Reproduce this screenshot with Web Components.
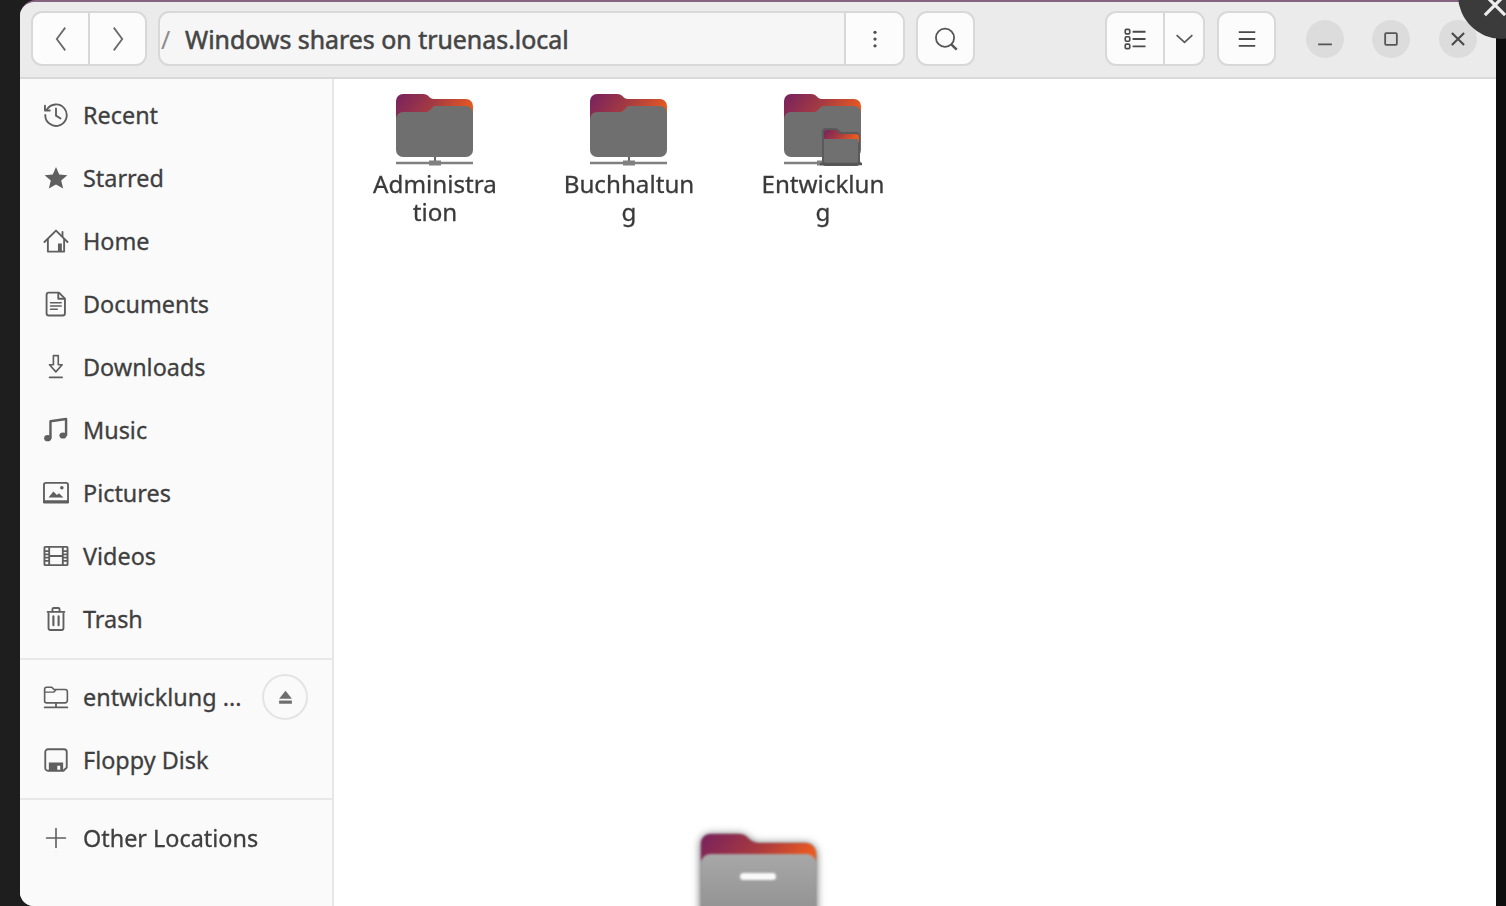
<!DOCTYPE html>
<html lang="en">
<head>
<meta charset="utf-8">
<title>Windows shares on truenas.local</title>
<style>
  html, body { margin: 0; height: 100%; overflow: hidden; background: linear-gradient(90deg, #1e1e1e 0 20px, #0e0e0e 1496px); }
  body { font-family: "Noto Sans", "Open Sans", sans-serif; color: #3d3d3d; }
</style>
</head>
<body>
<fm-window>
  <fm-header slot="header"></fm-header>
  <fm-sidebar slot="sidebar">
    <fm-place icon="recent">Recent</fm-place>
    <fm-place icon="starred">Starred</fm-place>
    <fm-place icon="home">Home</fm-place>
    <fm-place icon="documents">Documents</fm-place>
    <fm-place icon="downloads">Downloads</fm-place>
    <fm-place icon="music">Music</fm-place>
    <fm-place icon="pictures">Pictures</fm-place>
    <fm-place icon="videos">Videos</fm-place>
    <fm-place icon="trash">Trash</fm-place>
    <fm-divider></fm-divider>
    <fm-place icon="share" eject>entwicklung ...</fm-place>
    <fm-place icon="floppy">Floppy Disk</fm-place>
    <fm-divider></fm-divider>
    <fm-place icon="plus">Other Locations</fm-place>
  </fm-sidebar>
  <fm-files slot="files">
    <fm-folder>Administra<wbr>tion</fm-folder>
    <fm-folder>Buchhaltun<wbr>g</fm-folder>
    <fm-folder badge>Entwicklun<wbr>g</fm-folder>
  </fm-files>
</fm-window>
<fm-drag-icon></fm-drag-icon>
<fm-overview-close></fm-overview-close>

<script>
// Stroke icons on a 16 unit grid, same set as the symbolic ones in the sidebar
const ICONS = {
    recent: '<path d="M2.4 4.6A6.6 6.6 0 1 1 1.4 8"/><path d="M1.2 2.2v3h3"/><path d="M8 4v4.4l2.8 1.8"/>',
    starred: '<path fill="currentColor" stroke="none" d="M8 1.2l2 4.6 5 .5-3.8 3.3 1.2 4.9L8 12l-4.4 2.5 1.2-4.9L1 6.3l5-.5z"/>',
    home: '<path d="M.9 8.6 8 1.6l7.1 7"/><path d="M3 7v7.5h10V7"/><path fill="currentColor" stroke="none" d="M9.2 9.6h2.4v5H9.2z"/><path d="M12 2.4v2.6"/>',
    documents: '<path d="M3.6 1h6.2L13.5 4.7v9a1.4 1.4 0 0 1-1.4 1.4H3.6a1.4 1.4 0 0 1-1.4-1.4V2.4A1.4 1.4 0 0 1 3.6 1z"/><path d="M9.4 1.2v3.6h3.9"/><path stroke-width=".9" d="M4.6 7.2h6.6M4.6 9.2h6.6M4.6 11.2h4.2"/>',
    downloads: '<path stroke-width="1" d="M6.4 1h3v5.6h2.4L7.9 11 4 6.6h2.4z"/><path stroke-width="1" d="M4 14.4h7.8"/>',
    music: '<path stroke-width="1.5" d="M4.6 12.8V2.6l9.6-1.4v9.8"/><ellipse fill="currentColor" stroke="none" cx="2.9" cy="13" rx="2.2" ry="1.9"/><ellipse fill="currentColor" stroke="none" cx="12.3" cy="11.4" rx="2.2" ry="1.9"/>',
    pictures: '<rect x=".6" y="1.8" width="14.8" height="11.8" rx="1.2"/><path stroke-width="2" d="M.8 13.4h14.4"/><path fill="currentColor" stroke="none" d="M3.4 10.8l3-3.8 2.2 2.2 1.2-1.1 2.8 2.7z"/><circle fill="currentColor" stroke="none" cx="11.6" cy="4.8" r="1.1"/>',
    videos: '<rect x=".9" y="2.4" width="14.2" height="11.2" rx=".4"/><path d="M3.8 2.4v11.2M12.2 2.4v11.2M3.8 8h8.4"/><path stroke-width="1" d="M1 5h2.6M1 7h2.6M1 9h2.6M1 11h2.6M12.4 5H15M12.4 7H15M12.4 9H15M12.4 11H15"/>',
    trash: '<path d="M3.4 4.4v9.2a1.2 1.2 0 0 0 1.2 1.2h6.8a1.2 1.2 0 0 0 1.2-1.2V4.4"/><path d="M2.8 3.6h10.4"/><path d="M5.8 3.4V2a.8.8 0 0 1 .8-.8h2.8a.8.8 0 0 1 .8.8v1.4"/><path stroke-width="1.3" d="M6.4 6.4v5.4M9.6 6.4v5.4"/>',
    share: '<path stroke-width="1" d="M1 3.2a1.2 1.2 0 0 1 1.2-1.2h3.2l1.4 1.4h6.8A1.4 1.4 0 0 1 15 4.8v5.4a1.4 1.4 0 0 1-1.4 1.4H2.2A1.2 1.2 0 0 1 1 10.4z"/><path stroke-width=".9" d="M1 5h5.6L8 3.6"/><path stroke-width="1.1" d="M1 14.4h14M8 11.6v2.8"/>',
    floppy: '<path d="M3 1.4h10a1.6 1.6 0 0 1 1.6 1.6v9.6L12.6 14.6H3A1.6 1.6 0 0 1 1.4 13V3A1.6 1.6 0 0 1 3 1.4z"/><path fill="currentColor" stroke="none" d="M3.6 9.6h8.8v5H10.6v-3H8.8v3H3.6z"/>',
    plus: '<path stroke-width="1" d="M8 2.2v11.6M2.2 8h11.6"/>'
};

// Small helper so every class can ask for an svg string
function iconSvg(name, size) {
    return `<svg width="${size}" height="${size}" viewBox="0 0 16 16" fill="none" stroke="currentColor" stroke-width="1.15" stroke-linecap="round" stroke-linejoin="round">${ICONS[name]}</svg>`;
}

// Outer window: header on top, then sidebar and file view
class FmWindow extends HTMLElement {
    constructor() {
        super();
        this.attachShadow({ mode: 'open' });
        this.shadowRoot.innerHTML = `
            <style>
                :host {
                    display: flex;
                    flex-direction: column;
                    box-sizing: border-box;
                    margin-left: 20px;
                    width: 1476px;
                    height: 906px;
                    background: #fff;
                    border-top: 2px solid #85647f;
                    border-radius: 16px 16px 0 14px;
                    overflow: hidden;
                    filter: blur(.75px);
                }
                .main { flex: 1; display: flex; min-height: 0; }
            </style>
            <slot name="header"></slot>
            <div class="main">
                <slot name="sidebar"></slot>
                <slot name="files"></slot>
            </div>
        `;
    }
}

// Header bar with the navigation, path and window buttons
class FmHeader extends HTMLElement {
    constructor() {
        super();
        this.attachShadow({ mode: 'open' });
        this.shadowRoot.innerHTML = `
            <style>
                :host {
                    display: flex;
                    align-items: center;
                    box-sizing: border-box;
                    height: 77px;
                    flex: none;
                    padding: 0 0 2px 11px;
                    background: #ebebeb;
                    border-bottom: 2px solid #d9d9d9;
                    color: #4a4a4a;
                }
                .group {
                    display: flex;
                    box-sizing: border-box;
                    height: 55px;
                    background: #fcfcfc;
                    border: 2px solid #d8d8d8;
                    border-radius: 11px;
                    overflow: hidden;
                    flex: none;
                }
                .group > div { display: flex; align-items: center; justify-content: center; }
                .group > div + div { border-left: 2px solid #d8d8d8; }
                .nav { width: 116px; }
                .nav > div { flex: 1; }
                .path { width: 747px; margin-left: 11px; background: #f6f6f6; }
                .crumbs {
                    flex: 1;
                    justify-content: flex-start !important;
                    font-size: 24.9px;
                    color: #454545;
                    -webkit-text-stroke: .55px #454545;
                    white-space: nowrap;
                }
                .slash { color: #8c8c8c; width: 25px; font-size: 25px; -webkit-text-stroke: 0; padding-left: 1px; box-sizing: border-box; }
                .more { width: 57px; background: #fcfcfc; }
                .search { width: 59px; margin-left: 11px; }
                .view { width: 100px; margin-left: 130px; }
                .view > div:first-child { width: 56px; }
                .view > div:last-child { flex: 1; }
                .menu { width: 59px; margin-left: 12px; }
                .ctl {
                    flex: none;
                    width: 38px;
                    height: 38px;
                    border-radius: 50%;
                    background: #dcdcdc;
                    display: flex;
                    align-items: center;
                    justify-content: center;
                }
                .ctl.min { margin-left: 30px; }
                .ctl.max { margin-left: 28px; }
                .ctl.close { margin-left: 29px; }
                svg { display: block; }
            </style>
            <div class="group nav">
                <div><svg width="26" height="26" viewBox="0 0 16 16" fill="none" stroke="#6a6a6a" stroke-width="1.1"><path d="M10.6 1 5.4 8l5.2 7"/></svg></div>
                <div><svg width="26" height="26" viewBox="0 0 16 16" fill="none" stroke="#6a6a6a" stroke-width="1.1"><path d="M5.4 1l5.2 7-5.2 7"/></svg></div>
            </div>
            <div class="group path">
                <div class="crumbs"><span class="slash">/</span>Windows shares on truenas.local</div>
                <div class="more"><svg width="20" height="20" viewBox="0 0 16 16" fill="#505050"><circle cx="8" cy="2.6" r="1.3"/><circle cx="8" cy="8" r="1.3"/><circle cx="8" cy="13.4" r="1.3"/></svg></div>
            </div>
            <div class="group search">
                <div style="flex:1"><svg width="26" height="26" viewBox="0 0 16 16" fill="none" stroke="#555" stroke-width="1.1"><circle cx="7.4" cy="7.2" r="5.6"/><path stroke-width="1.5" d="M11.4 11.4l3.2 3.2"/></svg></div>
            </div>
            <div class="group view">
                <div><svg width="24" height="24" viewBox="0 0 16 16" fill="none" stroke="#4a4a4a" stroke-width="1.1"><rect x="1.5" y="1.6" width="3" height="3" rx=".8"/><rect x="1.5" y="6.5" width="3" height="3" rx=".8"/><rect x="1.5" y="11.4" width="3" height="3" rx=".8"/><path stroke-width="1.3" d="M6.4 3.1h8.6M6.4 8h8.6M6.4 12.9h8.6"/></svg></div>
                <div><svg width="21" height="21" viewBox="0 0 16 16" fill="none" stroke="#5a5a5a" stroke-width="1.3"><path d="M2 5.4 8 11l6-5.6"/></svg></div>
            </div>
            <div class="group menu">
                <div style="flex:1"><svg width="22" height="22" viewBox="0 0 16 16" fill="none" stroke="#4a4a4a" stroke-width="1.3"><path d="M2 3h12M2 8h12M2 13h12"/></svg></div>
            </div>
            <div class="ctl min"><svg width="20" height="20" viewBox="0 0 16 16" fill="none" stroke="#555" stroke-width="1.4"><path d="M2.5 12.2h11"/></svg></div>
            <div class="ctl max"><svg width="18" height="18" viewBox="0 0 16 16" fill="none" stroke="#555" stroke-width="1.6"><rect x="2.8" y="2.8" width="10.4" height="10.4" rx="1"/></svg></div>
            <div class="ctl close"><svg width="18" height="18" viewBox="0 0 16 16" fill="none" stroke="#4a4a4a" stroke-width="1.9"><path d="M2.6 2.6l10.8 10.8M13.4 2.6 2.6 13.4"/></svg></div>
        `;
    }
}

// Left column, rows are passed in through the slot
class FmSidebar extends HTMLElement {
    constructor() {
        super();
        this.attachShadow({ mode: 'open' });
        this.shadowRoot.innerHTML = `
            <style>
                :host {
                    display: block;
                    box-sizing: border-box;
                    flex: none;
                    width: 314px;
                    padding-top: 4px;
                    background: #fafafa;
                    border-right: 2px solid #e6e6e6;
                }
            </style>
            <slot></slot>
        `;
    }
}

// One sidebar row: icon, label and optional eject button
class FmPlace extends HTMLElement {
    constructor() {
        super();
        this.attachShadow({ mode: 'open' });
    }

    connectedCallback() {
        const eject = this.hasAttribute('eject')
            ? `<span class="eject"><svg width="17" height="17" viewBox="0 0 16 16" fill="#6e6e6e"><path d="M8 2.6 14 10.2H2z"/><rect x="2" y="11.8" width="12" height="3"/></svg></span>`
            : '';
        this.shadowRoot.innerHTML = `
            <style>
                :host {
                    display: flex;
                    align-items: center;
                    height: 63px;
                    padding-left: 23px;
                    font-size: 23.4px;
                    color: #3f3f3f;
                    -webkit-text-stroke: .3px #3f3f3f;
                }
                .icon { width: 40px; flex: none; color: #5f5f5f; display: flex; }
                svg { display: block; }
                .label { flex: 1; white-space: nowrap; }
                .eject {
                    box-sizing: border-box;
                    width: 46px;
                    height: 46px;
                    margin-right: 24px;
                    border: 2px solid #e4e4e4;
                    border-radius: 50%;
                    display: flex;
                    align-items: center;
                    justify-content: center;
                }
            </style>
            <span class="icon">${iconSvg(this.getAttribute('icon'), 26)}</span>
            <span class="label"><slot></slot></span>
            ${eject}
        `;
    }
}

// Thin line between the sidebar sections
class FmDivider extends HTMLElement {
    constructor() {
        super();
        this.attachShadow({ mode: 'open' });
        this.shadowRoot.innerHTML = `
            <style>
                :host { display: block; height: 2px; margin: 8px 0 5px; background: #e8e8e8; }
                :host(:last-of-type) { margin: 7px 0 6px; }
            </style>
        `;
    }
}

// File view, icons flow from the top left
class FmFiles extends HTMLElement {
    constructor() {
        super();
        this.attachShadow({ mode: 'open' });
        this.shadowRoot.innerHTML = `
            <style>
                :host {
                    display: flex;
                    flex: 1;
                    align-items: flex-start;
                    padding: 15px 0 0 4px;
                    background: #fff;
                }
            </style>
            <slot></slot>
        `;
    }
}

let folderId = 0;

// Folder item: share icon with a wrapped name below it
class FmFolder extends HTMLElement {
    constructor() {
        super();
        this.attachShadow({ mode: 'open' });
    }

    connectedCallback() {
        const id = 'f' + (++folderId);
        const badge = this.hasAttribute('badge') ? `
            <g transform="translate(11 0)">
                <path d="M28 38a4 4 0 0 1 4-4h9c4 0 4 4 8 4h13a4 4 0 0 1 4 4v26a4 4 0 0 1-4 4H32a4 4 0 0 1-4-4z" fill="#5a5a5a"/>
                <path d="M30 39a3 3 0 0 1 3-3h7c4 0 4 4 8 4h14a3 3 0 0 1 3 3v5H30z" fill="url(#${id})"/>
                <path d="M30 45h33a1 1 0 0 1 1 1v21a3 3 0 0 1-3 3H33a3 3 0 0 1-3-3z" fill="#707070"/>
                <path d="M26 70h42" stroke="#555" stroke-width="2.4"/>
            </g>` : '';
        this.shadowRoot.innerHTML = `
            <style>
                :host {
                    display: flex;
                    flex-direction: column;
                    align-items: center;
                    flex: none;
                    width: 194px;
                    font-size: 24.2px;
                    line-height: 28px;
                    color: #3a3a3a;
                    -webkit-text-stroke: .3px #3a3a3a;
                    text-align: center;
                }
                svg { display: block; overflow: visible; }
                .name { width: 133px; margin-top: 2px; }
            </style>
            <svg width="80" height="74" viewBox="0 0 80 74">
                <defs>
                    <linearGradient id="${id}" x1="0" y1="0" x2="1" y2=".35">
                        <stop offset="0" stop-color="#77215f"/>
                        <stop offset=".5" stop-color="#a33a42"/>
                        <stop offset="1" stop-color="#ea5a20"/>
                    </linearGradient>
                </defs>
                <path d="M1 7a7 7 0 0 1 7-7h20c6 0 6 5 11 5h32a7 7 0 0 1 7 7v26H1z" fill="url(#${id})"/>
                <path d="M1 25a7 7 0 0 1 7-7h23c5 0 5-6 10-6h30a7 7 0 0 1 7 7v37a7 7 0 0 1-7 7H8a7 7 0 0 1-7-7z" fill="#6f6f6f"/>
                <path d="M40 63v5" stroke="#666" stroke-width="2"/>
                <path d="M1 69h77" stroke="#808080" stroke-width="2.4"/>
                <rect x="34" y="66.5" width="12" height="5" fill="#808080"/>
                ${badge}
            </svg>
            <div class="name"><slot></slot></div>
        `;
    }
}

// Folder being dragged, sits over the file view at the bottom edge
class FmDragIcon extends HTMLElement {
    constructor() {
        super();
        this.attachShadow({ mode: 'open' });
        this.shadowRoot.innerHTML = `
            <style>
                :host { position: absolute; left: 701px; top: 833px; width: 115px; height: 73px; overflow: visible; filter: blur(.8px) drop-shadow(0 1px 4px rgba(0,0,0,.7)); }
                svg { display: block; }
            </style>
            <svg width="115" height="90" viewBox="0 0 115 90">
                <defs>
                    <linearGradient id="tab" x1="0" y1="0" x2="1" y2=".3">
                        <stop offset="0" stop-color="#77215f"/>
                        <stop offset=".55" stop-color="#a8393f"/>
                        <stop offset="1" stop-color="#ea5a20"/>
                    </linearGradient>
                    <linearGradient id="face" x1="0" y1="0" x2="0" y2="1">
                        <stop offset="0" stop-color="#a8a8a8"/>
                        <stop offset="1" stop-color="#8e8e8e"/>
                    </linearGradient>
                </defs>
                <path d="M0 10a9 9 0 0 1 9-9h30c8 0 9 9 18 9h48a10 10 0 0 1 10 10v24H0z" fill="url(#tab)"/>
                <path d="M0 30a9 9 0 0 1 9-9h97a9 9 0 0 1 9 9v60H0z" fill="url(#face)"/>
                <rect x="39" y="40" width="36" height="7" rx="3.5" fill="#fafafa"/>
            </svg>
        `;
    }
}

// Dark overview close button clipped by the top right corner
class FmOverviewClose extends HTMLElement {
    constructor() {
        super();
        this.attachShadow({ mode: 'open' });
        this.shadowRoot.innerHTML = `
            <style>
                :host { position: absolute; left: 1458px; top: -49px; width: 88px; height: 88px; border-radius: 50%; background: #3b3b3b; filter: blur(.7px); }
                svg { position: absolute; left: 22px; top: 39px; }
            </style>
            <svg width="30" height="30" viewBox="0 0 16 16" fill="none" stroke="#eee" stroke-width="1.7"><path d="M2.6 2.6l10.8 10.8M13.4 2.6 2.6 13.4"/></svg>
        `;
    }
}

customElements.define('fm-window', FmWindow);
customElements.define('fm-header', FmHeader);
customElements.define('fm-sidebar', FmSidebar);
customElements.define('fm-place', FmPlace);
customElements.define('fm-divider', FmDivider);
customElements.define('fm-files', FmFiles);
customElements.define('fm-folder', FmFolder);
customElements.define('fm-drag-icon', FmDragIcon);
customElements.define('fm-overview-close', FmOverviewClose);
</script>
</body>
</html>
